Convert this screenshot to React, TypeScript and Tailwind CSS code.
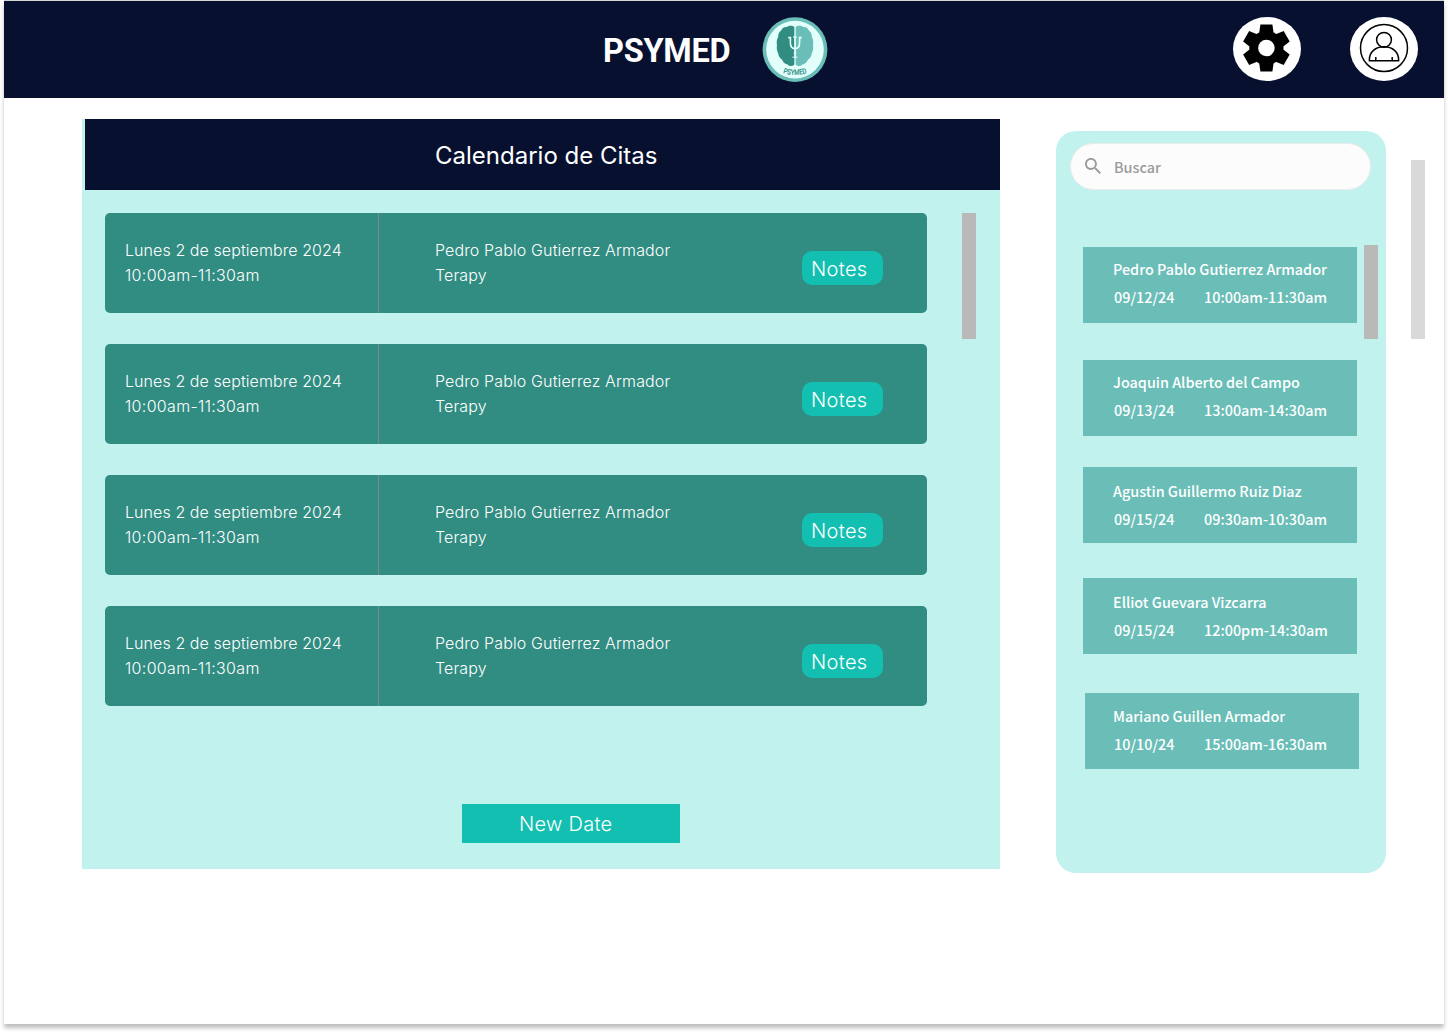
const appointments = Array.from({ length: 4 }, (_, id) => ({
  id,
  date: "Lunes 2 de septiembre 2024",
  time: "10:00am-11:30am",
  patient: "Pedro Pablo Gutierrez Armador",
  kind: "Terapy",
}));

const patients = [
  { name: "Pedro Pablo Gutierrez Armador", date: "09/12/24", time: "10:00am-11:30am", box: "mt-0 pl-[30px] pt-[8px]" },
  { name: "Joaquin Alberto del Campo", date: "09/13/24", time: "13:00am-14:30am", box: "mt-[37px] pl-[30px] pt-[8px]" },
  { name: "Agustin Guillermo Ruiz Diaz", date: "09/15/24", time: "09:30am-10:30am", box: "mt-[31px] pl-[30px] pt-[10px]" },
  { name: "Elliot Guevara Vizcarra", date: "09/15/24", time: "12:00pm-14:30am", box: "mt-[35px] pl-[30px] pt-[10px]" },
  { name: "Mariano Guillen Armador", date: "10/10/24", time: "15:00am-16:30am", box: "mt-[39px] ml-[2px] pl-[28px] pt-[9px]" },
];

function Logo() {
  return (
    <svg className="ml-[32px] mt-[15px] h-[67px] w-[66px] shrink-0" viewBox="0 -0.6 66 67">
      <circle cx="33" cy="33" r="32.4" fill="#6abeb7" />
      <circle cx="33" cy="33" r="28.8" fill="#e2fffc" />
      <path
        d="M32.5 10.4 C30 8.4 26.4 8.8 25 10.4 C22 10 19.8 11.8 19.2 14 C17 15.4 16 18 16.2 20.4 C14.6 22.8 14.4 26 15 28.4 C14.4 31.4 15 34.4 16.2 36.6 C16.4 39.4 18 41.8 20 43 C21 46 23.4 47.8 25.6 47.8 C27.6 49.8 31 50 32.5 48 Z"
        fill="#318c82"
      />
      <path
        d="M33.5 10.4 C36 8.4 39.6 8.8 41 10.4 C44 10 46.2 11.8 46.8 14 C49 15.4 50 18 49.8 20.4 C51.4 22.8 51.6 26 51 28.4 C51.6 31.4 51 34.4 49.8 36.6 C49.6 39.4 48 41.8 46 43 C45 46 42.6 47.8 40.4 47.8 C38.4 49.8 35 50 33.5 48 Z"
        fill="#6abeb7"
      />
      <g fill="none" stroke="#e2fffc" strokeWidth="1.6">
        <path d="M33 9.5 V20 M33 41 V49" strokeWidth="0.8" />
        <path d="M33 20 V41" />
        <path d="M26.2 21 H28.4 V26.4 Q28.4 32 33 32 Q37.6 32 37.6 26.4 V21 H39.8" />
        <path d="M31 20.4 H35 M30.4 40.6 H35.6" strokeWidth="1" />
        <path d="M31.4 36.4 H34.6" strokeWidth="0.8" />
      </g>
      <path id="logo-arc" d="M20.6 56.4 Q33 60.4 46 56.4" fill="none" />
      <text fill="#318c82" fontFamily="Roboto" fontSize="7.8" fontWeight="600">
        <textPath href="#logo-arc" startOffset="0.4" textLength="24.4" lengthAdjust="spacingAndGlyphs">
          PSYMED
        </textPath>
      </text>
    </svg>
  );
}

function GearIcon() {
  return (
    <svg className="h-[64px] w-[68px]" viewBox="-34 -32 68 64">
      <g transform="translate(-0.6 -1)">
        <circle r="17.1" />
        {[0, 60, 120, 180, 240, 300].map((a) => (
          <path key={a} transform={`rotate(${a})`} d="M-7.2 -15 L-6 -23.4 H6 L7.2 -15 Z" />
        ))}
        <circle r="8.3" fill="#fff" />
      </g>
    </svg>
  );
}

function UserIcon() {
  return (
    <svg className="h-[64px] w-[68px]" viewBox="-34 -32 68 64" fill="none" stroke="#000" strokeWidth="1.5">
      <circle cx="0" cy="-1" r="23.5" />
      <circle cx="0" cy="-9.2" r="7.4" />
      <path d="M-14.6 11.8 V10.6 C-14.6 3 -8.6 -2.2 0 -2.2 C8.6 -2.2 14.6 3 14.6 10.6 V11.8 Z" />
      <path d="M-8.2 8 V11.6 M8.2 8 V11.6" />
    </svg>
  );
}

function Header() {
  return (
    <header className="flex h-[98px] border-t border-[#d4d8d2] bg-[#07112f]">
      <h1 className="ml-[599px] mt-[30px] w-[127px] whitespace-nowrap font-[Roboto] text-[32.5px] font-bold leading-[40px] tracking-[-0.25px] text-white">
        PSYMED
      </h1>
      <Logo />
      <button className="ml-auto mt-[16px] h-[64px] w-[68px] rounded-[50%] bg-white">
        <GearIcon />
      </button>
      <button className="ml-[49px] mr-[26px] mt-[16px] h-[64px] w-[68px] rounded-[50%] bg-white">
        <UserIcon />
      </button>
    </header>
  );
}

function Calendar() {
  return (
    <section className="mt-[21px] h-[750px] w-[918px] shrink-0 bg-[#c2f2ed] font-[Inter] font-light text-white">
      <h2 className="ml-[3px] h-[71px] bg-[#07112f] pl-[350px] text-[24px] font-normal leading-[73px]">
        Calendario de Citas
      </h2>
      <div className="flex pl-[23px] pt-[23px]">
        <ul className="flex w-[822px] flex-col gap-[31px]">
          {appointments.map((a) => (
            <li key={a.id} className="flex h-[100px] rounded-[5px] bg-[#318c82] text-[16px] leading-[25px]">
              <div className="w-[274px] whitespace-nowrap border-r border-[#80888a] pl-[20px] pt-[25px]">
                <p className="tracking-[0.08px]">{a.date}</p>
                <p className="tracking-[0.32px]">{a.time}</p>
              </div>
              <div className="w-[423px] pl-[56px] pt-[25px] tracking-[0.13px]">
                <p>{a.patient}</p>
                <p>{a.kind}</p>
              </div>
              <button className="mt-[38px] h-[34px] w-[81px] rounded-[10px] bg-[#12bfb0] pl-[9px] text-left text-[20px] leading-[36px] tracking-[0.35px]">
                Notes
              </button>
            </li>
          ))}
        </ul>
        <div className="ml-[35px] h-[126px] w-[14px] bg-[#b9b9b9]" />
      </div>
      <button className="ml-[380px] mt-[98px] block h-[39px] w-[218px] bg-[#12bfb0] pl-[57px] text-left text-[20px] leading-[40px] tracking-[0.3px]">
        New Date
      </button>
    </section>
  );
}

function Sidebar() {
  return (
    <aside className="ml-[56px] mt-[33px] h-[742px] w-[330px] shrink-0 rounded-[20px] bg-[#c2f2ed] pl-[14px] pt-[12px] font-['Noto_Sans_CJK_SC',sans-serif] font-medium">
      <div className="flex h-[47px] w-[301px] items-center rounded-full border border-[#ececec] bg-[#fcfcfc] pl-[14px] text-[#9b9b9b]">
        <svg className="mb-[2px] h-[16px] w-[16px]" viewBox="3 3 17.5 17.5" fill="currentColor">
          <path d="M15.5 14h-.79l-.28-.27C15.41 12.59 16 11.11 16 9.5 16 5.91 13.09 3 9.5 3S3 5.91 3 9.5 5.91 16 9.5 16c1.61 0 3.09-.59 4.23-1.57l.27.28v.79l5 4.99L20.49 19l-4.99-5zm-6 0C7.01 14 5 11.99 5 9.5S7.01 5 9.5 5 14 7.01 14 9.5 11.99 14 9.5 14z" />
        </svg>
        <span className="ml-[13px] text-[14.4px]">Buscar</span>
      </div>
      <div className="flex pt-[55px]">
        <ul className="ml-[13px] mt-[2px] w-[276px] text-[14.4px] leading-[28px] text-white">
          {patients.map((p) => (
            <li key={p.name} className={`h-[76px] w-[274px] whitespace-nowrap bg-[#6abeb7] ${p.box}`}>
              <p>{p.name}</p>
              <p className="flex pl-px">
                <span className="w-[90px]">{p.date}</span>
                <span>{p.time}</span>
              </p>
            </li>
          ))}
        </ul>
        <div className="ml-[5px] h-[94px] w-[14px] bg-[#b9b9b9]" />
      </div>
    </aside>
  );
}

export default function App() {
  return (
    <div className="h-[1032px] overflow-hidden bg-white px-[4px]">
      <div className="h-[1024px] w-[1440px] bg-white shadow-[0_4px_4px_rgba(0,0,0,0.25)]">
        <Header />
        <main className="flex pl-[78px]">
          <Calendar />
          <Sidebar />
          <div className="ml-[25px] mt-[62px] h-[179px] w-[14px] bg-[#d9d9d9]" />
        </main>
      </div>
    </div>
  );
}
